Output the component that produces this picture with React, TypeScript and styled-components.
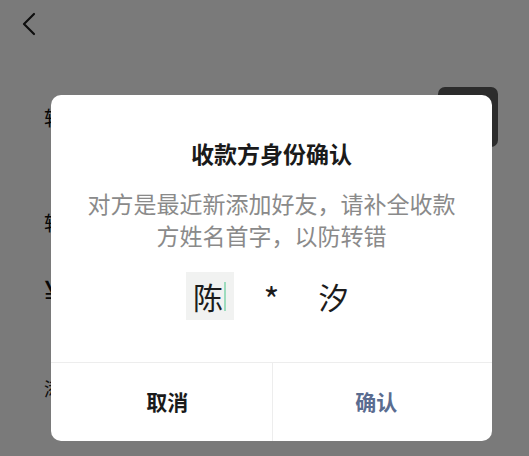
import React from 'react';
import styled, { createGlobalStyle } from 'styled-components';

const GlobalStyle = createGlobalStyle`
  html, body {
    margin: 0;
    padding: 0;
    background: #ffffff;
  }
  body {
    font-family: "Noto Sans CJK SC", "Noto Sans", sans-serif;
  }
`;

const App: React.FC = () => {
  return (
    <Page>
      <GlobalStyle />
      <Header>
        <BackIcon width="14" height="24" viewBox="0 0 14 24">
          <polyline points="12,2 2,12 12,22" />
        </BackIcon>
      </Header>
      <Content>
        <PayeeRow>
          <RowLabel>转账给</RowLabel>
          <Avatar />
        </PayeeRow>
        <AmountLabel>转账</AmountLabel>
        <Currency>¥</Currency>
        <NoteLabel>添加</NoteLabel>
      </Content>

      <Overlay>
        <Dialog>
          <Title>收款方身份确认</Title>
          <Message>对方是最近新添加好友，请补全收款方姓名首字，以防转错</Message>
          <NameRow>
            <NameCell $input>
              陈<Caret />
            </NameCell>
            <NameCell $small>*</NameCell>
            <NameCell>汐</NameCell>
          </NameRow>
          <Actions>
            <ActionButton $shift={6}>取消</ActionButton>
            <ActionButton $primary $shift={-6}>
              确认
            </ActionButton>
          </Actions>
        </Dialog>
      </Overlay>
    </Page>
  );
};

export default App;

const Page = styled.div`
  position: relative;
  width: 529px;
  height: 456px;
  overflow: hidden;
  background: #ffffff;
`;

const Header = styled.div`
  height: 48px;
  padding: 12px 0 0 22px;
  box-sizing: border-box;
`;

const BackIcon = styled.svg`
  display: block;
  fill: none;
  stroke: #1e1e1e;
  stroke-width: 2.2;
  stroke-linecap: round;
  stroke-linejoin: round;
`;

const Content = styled.div`
  display: flex;
  flex-direction: column;
  padding: 39px 31px 0 44px;
`;

const PayeeRow = styled.div`
  display: flex;
  align-items: center;
  justify-content: space-between;
  height: 60px;
`;

const RowLabel = styled.div`
  font-size: 20px;
  color: #111;
`;

const Avatar = styled.div`
  width: 60px;
  height: 60px;
  border-radius: 7px;
  background: #5c5c5c;
`;

const AmountLabel = styled.div`
  margin-top: 64px;
  font-size: 20px;
  line-height: 24px;
  color: #111;
`;

const Currency = styled.div`
  margin-top: 36px;
  font-size: 34px;
  line-height: 40px;
  color: #111;
`;

const NoteLabel = styled.div`
  margin-top: 66px;
  font-size: 18px;
  line-height: 22px;
  color: #222;
`;

const Overlay = styled.div`
  position: absolute;
  inset: 0;
  background: rgba(0, 0, 0, 0.52);
  display: flex;
  align-items: flex-start;
  padding: 95px 0 0 51px;
  box-sizing: border-box;
`;

const Dialog = styled.div`
  width: 441px;
  height: 346px;
  background: #ffffff;
  border-radius: 10px;
  display: flex;
  flex-direction: column;
  align-items: center;
  padding-top: 43px;
  box-sizing: border-box;
  overflow: hidden;
`;

const Title = styled.div`
  font-size: 23px;
  line-height: 30px;
  font-weight: bold;
  color: #1a1a1a;
`;

const Message = styled.div`
  margin-top: 19px;
  padding: 0 34px;
  font-size: 23px;
  line-height: 32px;
  color: #8a8a8a;
  text-align: center;
`;

const NameRow = styled.div`
  display: flex;
  gap: 14px;
  margin-top: 21px;
`;

const NameCell = styled.div<{ $input?: boolean; $small?: boolean }>`
  width: 48px;
  height: 48px;
  display: flex;
  align-items: center;
  justify-content: center;
  background: ${(p) => (p.$input ? '#f1f2f1' : 'transparent')};
  font-size: ${(p) => (p.$small ? '34px' : '30px')};
  padding-top: ${(p) => (p.$small ? '4px' : '0')};
  box-sizing: border-box;
  color: #1c1c1c;
`;

const Caret = styled.span`
  display: inline-block;
  width: 2px;
  height: 29px;
  margin-left: 1px;
  background: #9ddcbd;
`;

const Actions = styled.div`
  margin-top: auto;
  width: 100%;
  height: 78px;
  display: grid;
  grid-template-columns: 1fr 1fr;
  border-top: 1px solid #ededed;
`;

const ActionButton = styled.div<{ $primary?: boolean; $shift: number }>`
  display: flex;
  align-items: center;
  justify-content: center;
  font-size: 21px;
  font-weight: bold;
  color: ${(p) => (p.$primary ? '#5a6c90' : '#1a1a1a')};
  border-left: ${(p) => (p.$primary ? '1px solid #ededed' : 'none')};
  padding-bottom: 2px;
  padding-left: ${(p) => (p.$shift > 0 ? p.$shift * 2 : 0)}px;
  padding-right: ${(p) => (p.$shift < 0 ? -p.$shift * 2 : 0)}px;
`;
